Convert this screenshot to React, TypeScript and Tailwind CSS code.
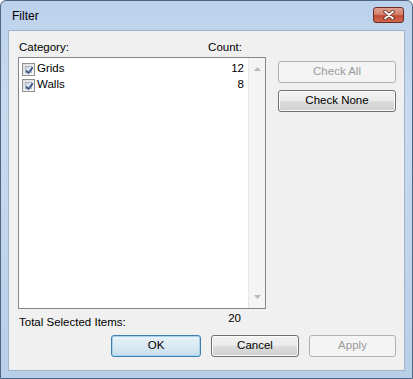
import React from "react";

const font = { fontFamily: '"Liberation Sans", Arial, sans-serif' };

function Check() {
  return (
    <div className="w-[13px] h-[13px] border border-[#8e8f8f] bg-gradient-to-br from-[#dcdcdc] to-[#fbfbfb] p-[2px] flex-none">
      <div className="w-full h-full border border-[#a8b3c2] bg-gradient-to-br from-[#cbd5e3] to-[#f3f6fa] relative">
        <svg viewBox="0 0 9 9" className="absolute -left-[1px] -top-[1px] w-[9px] h-[9px]">
          <path d="M1.2 4.6 L3.4 7 L7.8 1.4" stroke="#3c5286" strokeWidth="1.7" fill="none" />
        </svg>
      </div>
    </div>
  );
}

function Btn({ children, w, variant = "normal" }: { children: React.ReactNode; w: string; variant?: "normal" | "focus" | "disabled" }) {
  const base = "h-[22px] rounded-[3px] border flex items-center justify-center text-[11.5px] " + w;
  if (variant === "disabled")
    return <div className={base + " border-[#adb2b5] bg-[#f4f4f4] text-[#9a9a9a]"}>{children}</div>;
  if (variant === "focus")
    return (
      <div className={base + " border-[#3c7fb1] bg-gradient-to-b from-[#e9f3fa] via-[#dbe9f3] to-[#c6dcea] text-black shadow-[inset_0_0_0_1px_#a6d3ef]"}>
        {children}
      </div>
    );
  return (
    <div className={base + " border-[#707070] bg-[linear-gradient(to_bottom,#f2f2f2_0%,#ebebeb_50%,#dddddd_50%,#cfcfcf_100%)] text-black shadow-[inset_0_0_0_1px_#fcfcfc]"}>
      {children}
    </div>
  );
}

export default function App() {
  return (
    <div style={font} className="w-[413px] h-[379px] bg-[linear-gradient(to_bottom,#bcd2ec,#c9daef_30%,#b8cfe8)] border border-[#4c6683] rounded-t-[6px] flex flex-col overflow-hidden">
      <div className="h-[29px] flex items-center pl-[11px] pr-[8px] justify-between flex-none">
        <span className="text-[12px] text-black">Filter</span>
        <div className="w-[31px] h-[16px] mt-[6px] mb-auto rounded-[3px] border border-[#6e2a21] bg-[linear-gradient(to_bottom,#e0a191_0%,#d4806d_45%,#c24b35_55%,#cf6b4f_100%)] flex items-center justify-center">
          <svg viewBox="0 0 12 10" className="w-[12px] h-[10px]">
            <path d="M2 1.5 L10 8.5 M10 1.5 L2 8.5" stroke="#5a2a22" strokeWidth="3.4" strokeLinecap="round" />
            <path d="M2 1.5 L10 8.5 M10 1.5 L2 8.5" stroke="#ffffff" strokeWidth="1.8" strokeLinecap="round" />
          </svg>
        </div>
      </div>
      <div className="mx-[7px] h-[341px] bg-[#f0f0f0] border border-[#9fb4cc] flex-none flex flex-col text-[11.5px] text-black">
        <div className="flex pt-[26px] pl-[9px]">
          <div className="flex flex-col">
            <div className="flex h-[16px] items-center w-[247px] mt-[-17px] mb-[1px]">
              <span className="pl-[1px]">Category:</span>
              <span className="ml-auto mr-[23px]">Count:</span>
            </div>
            <div className="w-[248px] h-[252px] border border-[#828790] bg-white flex">
              <div className="flex-1 flex flex-col pt-[3px] pl-[3px]">
                {[
                  ["Grids", "12"],
                  ["Walls", "8"],
                ].map(([n, c]) => (
                  <div key={n} className="h-[16px] flex items-center">
                    <Check />
                    <span className="ml-[2px]">{n}</span>
                    <span className="ml-auto mr-[4px]">{c}</span>
                  </div>
                ))}
              </div>
              <div className="w-[17px] h-full bg-[#f4f4f4] border-l border-[#e8e8e8] flex flex-col items-center justify-between py-[9px]">
                <svg viewBox="0 0 7 4" className="w-[7px] h-[4px]"><path d="M0 4 L3.5 0 L7 4 Z" fill="#b8b8b8" /></svg>
                <svg viewBox="0 0 7 4" className="w-[7px] h-[4px]"><path d="M0 0 L3.5 4 L7 0 Z" fill="#b8b8b8" /></svg>
              </div>
            </div>
          </div>
          <div className="ml-[12px] mt-[4px] flex flex-col gap-[7px]">
            <Btn w="w-[118px]" variant="disabled">Check All</Btn>
            <Btn w="w-[118px]">Check None</Btn>
          </div>
        </div>
        <div className="flex pl-[10px] mt-[0px] h-[20px] items-start w-[232px]">
          <span className="mt-[5px]">Total Selected Items:</span>
          <span className="ml-auto mt-[1px]">20</span>
        </div>
        <div className="flex gap-[10px] pl-[102px] mt-[6px]">
          <Btn w="w-[90px]" variant="focus">OK</Btn>
          <Btn w="w-[88px]">Cancel</Btn>
          <Btn w="w-[87px]" variant="disabled">Apply</Btn>
        </div>
      </div>
    </div>
  );
}
